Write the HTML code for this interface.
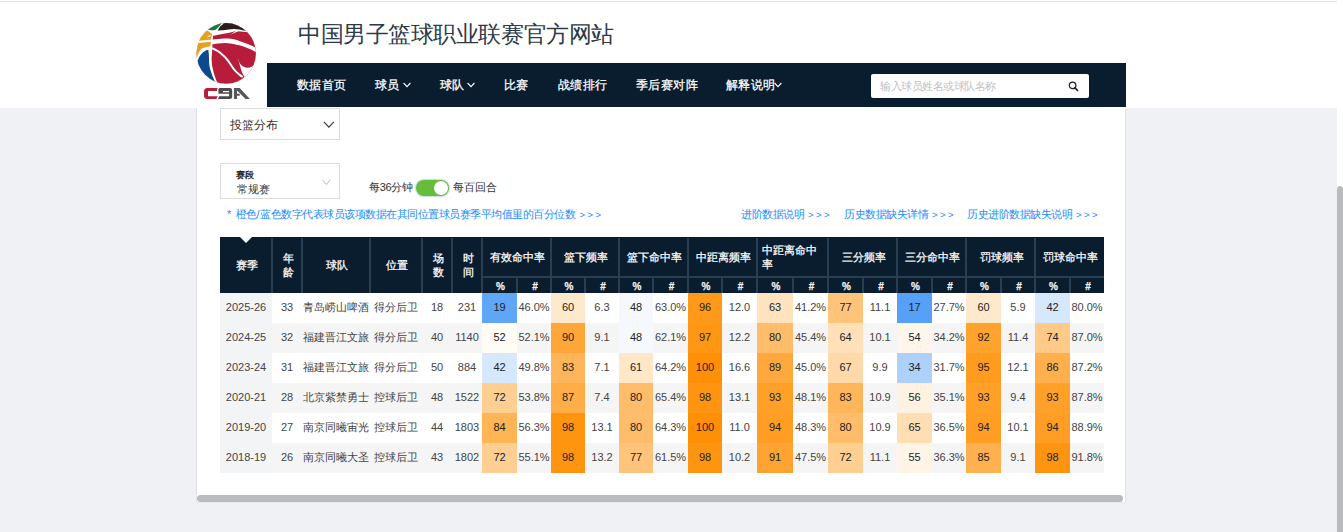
<!DOCTYPE html>
<html lang="zh"><head><meta charset="utf-8"><title>CBA</title>
<style>
*{box-sizing:border-box;margin:0;padding:0}
html,body{width:1343px;height:532px;overflow:hidden}
body{background:#f0f1f5;font-family:"Liberation Sans",sans-serif;color:#333;position:relative}
.abs{position:absolute}
#top{position:absolute;left:0;top:0;width:1343px;height:108px;background:#fff;border-top:1px solid #fff}
#topline{position:absolute;left:0;top:1px;width:1343px;height:1px;background:#e2e5e2}
#title{position:absolute;left:298px;top:20px;font-size:23px;line-height:28px;color:#2b3948;white-space:nowrap;letter-spacing:-0.45px}
#nav{position:absolute;left:267px;top:63px;width:859px;height:44px;background:#091d2e}
.ni{position:absolute;top:0;height:44px;line-height:44px;font-size:12px;color:#fff;-webkit-text-stroke:0.25px #fff;white-space:nowrap;letter-spacing:0.4px}
.chev{display:inline-block;vertical-align:middle;margin-top:-2px}
#search{position:absolute;left:871px;top:74px;width:218px;height:24px;background:#fff;border-radius:2px}
#search span{position:absolute;left:9px;top:0;line-height:24px;font-size:11px;color:#c0c0c0;white-space:nowrap;letter-spacing:-0.5px}
#card{position:absolute;left:196px;top:108px;width:930px;height:395px;background:#fff;border-left:1px solid #dfe1e3;border-right:1px solid #dfe1e3;border-bottom:1px solid #e6e8ea}
.sel{position:absolute;left:220px;width:120px;border:1px solid #dcdcdc;background:#fff}
.note{position:absolute;top:207px;font-size:11px;line-height:14px;color:#1a8cff;white-space:nowrap;letter-spacing:-0.5px}
.note i{font-style:normal;font-size:9.5px;letter-spacing:-0.1px;margin-left:1.5px}
.th{position:absolute;background:#091d2e;color:#fff;font-size:11px;-webkit-text-stroke:0.25px #fff;text-align:center;display:flex;align-items:center;justify-content:center;line-height:14px;padding-left:2px}
.sub{padding-top:3px}
.sep{position:absolute;background:#2a3e52}
.td{position:absolute;height:30px;line-height:28px;text-align:center;font-size:11px;color:#444;white-space:nowrap;overflow:hidden}
.pc{color:#222}
#scroll{position:absolute;left:197px;top:495px;width:926px;height:7px;border-radius:4px;background:#b9bbbd}
</style></head><body>
<div id="top"></div>
<div id="topline"></div>
<svg class="abs" style="left:192px;top:18px" width="70" height="88" viewBox="0 0 70 88">
<defs><clipPath id="ball"><ellipse cx="34.2" cy="35.4" rx="29.7" ry="30.3"/></clipPath></defs>
<g clip-path="url(#ball)">
<rect x="0" y="0" width="70" height="70" fill="#b71c3a"/>
<path fill="#fff" d="M0 0 H70 V15 L53.6 14.1 C50 13.6 47 13.2 43.4 13.3 C41.5 13.5 39.5 14.3 36.1 15 C30 16 25 17 21 17.8 L0 17.8 Z"/>
<path fill="#fff" d="M0 0 H24 L21 17.8 L20.3 30 L19.6 40 C19.7 48 21.2 56 27.6 70 H0 Z"/>
<path fill="#fff" d="M0 23 L21 21.6 C28 21 32 20.5 36.1 20.6 C40 20.8 44 21.8 47.4 22.9 C52 24.3 57 26.5 61.5 28.5 L70 33 V38 C64 34 60 31.5 55.8 30.2 C52 28.8 48 27.3 44.6 26.8 C40 26 36 25 33.3 25.1 C28 25.2 24 25.9 21.5 26.3 L0 26 Z"/>
<path fill="none" stroke="#fff" stroke-width="2" d="M20 30.2 C24 32 27 33.5 29 35.5 C32 38 34 40 35.8 42.4 C37.8 45 39.5 48 41.3 50.5 C43 52.8 45 54.8 47 56.2 C48.5 57.5 49.5 58.3 50.6 59"/>
<path fill="#fff" d="M46 40.6 C46.8 43.5 47.8 46 49.5 47.2 C51 48.4 53 49.6 55.7 49.7 C58.5 49.7 61 48.2 63.3 46.3 L70 46 V70 H53 L52.3 58.7 C51 56.5 49.8 54 49.2 52 C48.5 49.5 47.6 46.5 47 44.3 C46.5 42.8 46.1 41.7 46 40.6 Z"/>
<path fill="#1c7a3f" d="M10 0 H29.8 L29.3 5.7 C27.5 8.2 25.5 10.8 23.1 11.9 C20.5 12.6 17.5 12.2 14 11.6 L10 11.6 Z"/>
<path fill="#2a1d1d" d="M25.9 12.4 C27.2 9.5 28.8 7.5 31.3 6.1 L33 0 H70 V13 L53.3 12.7 C50 12.1 45 11 41.7 11 C38 11.2 35.5 11.6 33.3 11.9 C30 12.2 28 12.4 25.9 12.4 Z"/>
<path fill="#e4a11b" d="M0 12.6 H14.8 C17 13.5 19 15 20 16.3 C19.2 20 18.8 24 18.3 28.5 C14 28.8 11 29.8 8.9 31.1 C6.5 34 5 38 4.6 42.7 L0 42.7 Z"/>
<path fill="#fff" d="M0 23.4 L20 21.5 L19 23.8 L0 25.6 Z"/>
<path fill="#fff" d="M14.5 19.5 L18.8 16.4 L18.2 18.5 Z"/>
<path fill="#0d4a8b" d="M16.3 31.8 C11 33 7.5 37 5.5 43.6 L0 70 H26 C20 58 17.2 50 17.1 44 C17 38 16.8 34 16.3 31.8 Z"/>
<path fill="#fff" d="M38 17 L44.8 12.2 L46 13.6 L41.5 15.3 Z"/>
</g>
<g transform="translate(10,67)">
<path d="M15.6 3 H5.5 Q2 3 2 6.5 V10.6 Q2 14.1 5.5 14.1 H14.4 L15.6 11.2 H6 V6 H14.8 Z" fill="#b81d3a"/>
<path fill-rule="evenodd" fill="#4b4b4d" d="M18 3 H27.8 Q30.2 3 30.2 5.4 V11.7 Q30.2 14.1 27.8 14.1 H16 L17.2 11.3 H27.1 V8.7 H16.4 V4.4 Q16.4 3 18 3 Z M21 5.9 V7.2 H27.1 V5.9 Z"/>
<path d="M31.9 3 H37.7 L47.9 14.1 H43.5 L35.5 6 H35 V14.1 H31.9 Z" fill="#575759"/>
<rect x="34.8" y="8.7" width="2.9" height="2.1" fill="#575759"/>
</g>
</svg>
<div id="title">中国男子篮球职业联赛官方网站</div>
<div id="nav"></div>
<div class="ni" style="left:297px;top:63px">数据首页</div>
<div class="ni" style="left:375px;top:63px">球员<svg class="chev" style="margin-left:3px" width="8" height="6" viewBox="0 0 8 6"><path d="M0.6 1 L4 4.6 L7.4 1" fill="none" stroke="#fff" stroke-width="1.1"/></svg></div>
<div class="ni" style="left:440px;top:63px">球队<svg class="chev" style="margin-left:2px" width="8" height="6" viewBox="0 0 8 6"><path d="M0.6 1 L4 4.6 L7.4 1" fill="none" stroke="#fff" stroke-width="1.1"/></svg></div>
<div class="ni" style="left:504px;top:63px">比赛</div>
<div class="ni" style="left:558px;top:63px">战绩排行</div>
<div class="ni" style="left:636px;top:63px">季后赛对阵</div>
<div class="ni" style="left:726px;top:63px">解释说明<svg class="chev" style="margin-left:-2px" width="8" height="6" viewBox="0 0 8 6"><path d="M0.6 1 L4 4.6 L7.4 1" fill="none" stroke="#fff" stroke-width="1.1"/></svg></div>
<div id="search"><span>输入球员姓名或球队名称</span>
<svg class="abs" style="left:197px;top:7px" width="11" height="11" viewBox="0 0 11 11"><circle cx="4.6" cy="4.4" r="3.3" fill="none" stroke="#222" stroke-width="1.2"/><path d="M7 6.9 L9.6 9.5" stroke="#222" stroke-width="1.7" stroke-linecap="round"/></svg></div>
<div id="card"></div>
<div class="sel" style="top:108px;height:32px"><span class="abs" style="left:9px;top:9px;font-size:12px;line-height:14px;color:#333">投篮分布</span>
<svg class="abs" style="left:102px;top:12px" width="12" height="8" viewBox="0 0 12 8"><path d="M0.9 0.9 L5.9 6.2 L10.9 0.9" fill="none" stroke="#333" stroke-width="1.1"/></svg></div>
<div class="sel" style="top:163px;height:36px"><span class="abs" style="left:15px;top:6px;font-size:9px;line-height:11px;color:#111;-webkit-text-stroke:0.3px #111">赛段</span><span class="abs" style="left:16px;top:19px;font-size:11px;line-height:13px;color:#333">常规赛</span>
<svg class="abs" style="left:101px;top:15px" width="9" height="7" viewBox="0 0 9 7"><path d="M0.5 0.8 L4.4 5.5 L8.3 0.8" fill="none" stroke="#bbb" stroke-width="1"/></svg></div>
<div class="abs" style="left:369px;top:180px;font-size:11px;line-height:15px;color:#333;white-space:nowrap;letter-spacing:-0.3px">每36分钟</div>
<div class="abs" style="left:415px;top:179px;width:35px;height:18px;border-radius:9px;background:#c9def7;box-shadow:0 0 2px #d6e7fb"></div>
<div class="abs" style="left:416px;top:180px;width:33px;height:16px;border-radius:8px;background:#67bd3a"></div>
<div class="abs" style="left:433.5px;top:181px;width:14px;height:14px;border-radius:7px;background:#fff"></div>
<div class="abs" style="left:453px;top:180px;font-size:11px;line-height:15px;color:#333;white-space:nowrap">每百回合</div>
<div class="note" style="left:227px"><b style="font-weight:normal;display:inline-block;width:8.5px;letter-spacing:0">*</b>橙色<b style="font-weight:normal;letter-spacing:0.8px">/</b>蓝色数字代表球员该项数据在其同位置球员赛季平均值里的百分位数 <i>&gt; &gt; &gt;</i></div>
<div class="note" style="left:741px">进阶数据说明 <i>&gt; &gt; &gt;</i></div>
<div class="note" style="left:844px">历史数据缺失详情 <i>&gt; &gt; &gt;</i></div>
<div class="note" style="left:967px">历史进阶数据缺失说明 <i>&gt; &gt; &gt;</i></div>
<div class="abs" style="left:220px;top:237px;width:884px;height:56px;background:#091d2e"></div>
<div class="th" style="left:220px;top:237px;width:52px;height:56px">赛季</div>
<div class="th" style="left:272px;top:237px;width:30px;height:56px">年<br>龄</div>
<div class="th" style="left:302px;top:237px;width:68px;height:56px">球队</div>
<div class="th" style="left:370px;top:237px;width:52px;height:56px">位置</div>
<div class="th" style="left:422px;top:237px;width:30px;height:56px">场<br>数</div>
<div class="th" style="left:452px;top:237px;width:30px;height:56px">时<br>间</div>
<div class="th" style="left:482px;top:237px;width:69px;height:40px">有效命中率</div>
<div class="th sub" style="left:482px;top:277px;width:35px;height:16px;font-size:10px;font-weight:bold;color:#e6e6e6">%</div>
<div class="th sub" style="left:517px;top:277px;width:34px;height:16px;font-size:10px;font-weight:bold;color:#e6e6e6">#</div>
<div class="th" style="left:551px;top:237px;width:68px;height:40px">篮下频率</div>
<div class="th sub" style="left:551px;top:277px;width:34px;height:16px;font-size:10px;font-weight:bold;color:#e6e6e6">%</div>
<div class="th sub" style="left:585px;top:277px;width:34px;height:16px;font-size:10px;font-weight:bold;color:#e6e6e6">#</div>
<div class="th" style="left:619px;top:237px;width:69px;height:40px">篮下命中率</div>
<div class="th sub" style="left:619px;top:277px;width:34px;height:16px;font-size:10px;font-weight:bold;color:#e6e6e6">%</div>
<div class="th sub" style="left:653px;top:277px;width:35px;height:16px;font-size:10px;font-weight:bold;color:#e6e6e6">#</div>
<div class="th" style="left:688px;top:237px;width:69px;height:40px">中距离频率</div>
<div class="th sub" style="left:688px;top:277px;width:34px;height:16px;font-size:10px;font-weight:bold;color:#e6e6e6">%</div>
<div class="th sub" style="left:722px;top:277px;width:35px;height:16px;font-size:10px;font-weight:bold;color:#e6e6e6">#</div>
<div class="th" style="left:757px;top:237px;width:71px;height:40px;justify-content:flex-start;padding-left:5px;text-align:left">中距离命中<br>率</div>
<div class="th sub" style="left:757px;top:277px;width:36px;height:16px;font-size:10px;font-weight:bold;color:#e6e6e6">%</div>
<div class="th sub" style="left:793px;top:277px;width:35px;height:16px;font-size:10px;font-weight:bold;color:#e6e6e6">#</div>
<div class="th" style="left:828px;top:237px;width:69px;height:40px">三分频率</div>
<div class="th sub" style="left:828px;top:277px;width:35px;height:16px;font-size:10px;font-weight:bold;color:#e6e6e6">%</div>
<div class="th sub" style="left:863px;top:277px;width:34px;height:16px;font-size:10px;font-weight:bold;color:#e6e6e6">#</div>
<div class="th" style="left:897px;top:237px;width:69px;height:40px">三分命中率</div>
<div class="th sub" style="left:897px;top:277px;width:35px;height:16px;font-size:10px;font-weight:bold;color:#e6e6e6">%</div>
<div class="th sub" style="left:932px;top:277px;width:34px;height:16px;font-size:10px;font-weight:bold;color:#e6e6e6">#</div>
<div class="th" style="left:966px;top:237px;width:69px;height:40px">罚球频率</div>
<div class="th sub" style="left:966px;top:277px;width:35px;height:16px;font-size:10px;font-weight:bold;color:#e6e6e6">%</div>
<div class="th sub" style="left:1001px;top:277px;width:34px;height:16px;font-size:10px;font-weight:bold;color:#e6e6e6">#</div>
<div class="th" style="left:1035px;top:237px;width:69px;height:40px">罚球命中率</div>
<div class="th sub" style="left:1035px;top:277px;width:35px;height:16px;font-size:10px;font-weight:bold;color:#e6e6e6">%</div>
<div class="th sub" style="left:1070px;top:277px;width:34px;height:16px;font-size:10px;font-weight:bold;color:#e6e6e6">#</div>
<div class="sep" style="left:271px;top:238px;width:2px;height:55px"></div>
<div class="sep" style="left:301px;top:238px;width:2px;height:55px"></div>
<div class="sep" style="left:369px;top:238px;width:2px;height:55px"></div>
<div class="sep" style="left:421px;top:238px;width:2px;height:55px"></div>
<div class="sep" style="left:451px;top:238px;width:2px;height:55px"></div>
<div class="sep" style="left:481px;top:238px;width:2px;height:55px"></div>
<div class="sep" style="left:516px;top:277px;width:2px;height:16px"></div>
<div class="sep" style="left:550px;top:238px;width:2px;height:55px"></div>
<div class="sep" style="left:584px;top:277px;width:2px;height:16px"></div>
<div class="sep" style="left:618px;top:238px;width:2px;height:55px"></div>
<div class="sep" style="left:652px;top:277px;width:2px;height:16px"></div>
<div class="sep" style="left:687px;top:238px;width:2px;height:55px"></div>
<div class="sep" style="left:721px;top:277px;width:2px;height:16px"></div>
<div class="sep" style="left:756px;top:238px;width:2px;height:55px"></div>
<div class="sep" style="left:792px;top:277px;width:2px;height:16px"></div>
<div class="sep" style="left:827px;top:238px;width:2px;height:55px"></div>
<div class="sep" style="left:862px;top:277px;width:2px;height:16px"></div>
<div class="sep" style="left:896px;top:238px;width:2px;height:55px"></div>
<div class="sep" style="left:931px;top:277px;width:2px;height:16px"></div>
<div class="sep" style="left:965px;top:238px;width:2px;height:55px"></div>
<div class="sep" style="left:1000px;top:277px;width:2px;height:16px"></div>
<div class="sep" style="left:1034px;top:238px;width:2px;height:55px"></div>
<div class="sep" style="left:1069px;top:277px;width:2px;height:16px"></div>
<div class="sep" style="left:482px;top:276px;width:622px;height:2px"></div>
<div class="abs" style="left:240px;top:237px;width:0;height:0;border-left:6px solid transparent;border-right:6px solid transparent;border-top:6px solid #fff"></div>
<div class="abs" style="left:220px;top:293px;width:884px;height:30px;background:#fff"></div>
<div class="abs" style="left:220px;top:293px;width:52px;height:30px;background:#f3f4f6"></div>
<div class="td" style="left:220px;top:293px;width:52px">2025-26</div>
<div class="td" style="left:272px;top:293px;width:30px">33</div>
<div class="td" style="left:302px;top:293px;width:68px">青岛崂山啤酒</div>
<div class="td" style="left:370px;top:293px;width:52px">得分后卫</div>
<div class="td" style="left:422px;top:293px;width:30px">18</div>
<div class="td" style="left:452px;top:293px;width:30px">231</div>
<div class="td pc" style="left:482px;top:293px;width:35px;background:#60a6f7">19</div>
<div class="td" style="left:517px;top:293px;width:34px">46.0%</div>
<div class="td pc" style="left:551px;top:293px;width:34px;background:#ffe9cd">60</div>
<div class="td" style="left:585px;top:293px;width:34px">6.3</div>
<div class="td pc" style="left:619px;top:293px;width:34px;background:#f5f9fe">48</div>
<div class="td" style="left:653px;top:293px;width:35px">63.0%</div>
<div class="td pc" style="left:688px;top:293px;width:34px;background:#ff991a">96</div>
<div class="td" style="left:722px;top:293px;width:35px">12.0</div>
<div class="td pc" style="left:757px;top:293px;width:36px;background:#ffe2be">63</div>
<div class="td" style="left:793px;top:293px;width:35px">41.2%</div>
<div class="td pc" style="left:828px;top:293px;width:35px;background:#ffc379">77</div>
<div class="td" style="left:863px;top:293px;width:34px">11.1</div>
<div class="td pc" style="left:897px;top:293px;width:35px;background:#56a0f7">17</div>
<div class="td" style="left:932px;top:293px;width:34px">27.7%</div>
<div class="td pc" style="left:966px;top:293px;width:35px;background:#ffe9cd">60</div>
<div class="td" style="left:1001px;top:293px;width:34px">5.9</div>
<div class="td pc" style="left:1035px;top:293px;width:35px;background:#d6e8fd">42</div>
<div class="td" style="left:1070px;top:293px;width:34px">80.0%</div>
<div class="abs" style="left:220px;top:323px;width:884px;height:30px;background:#f5f5f5"></div>
<div class="abs" style="left:220px;top:323px;width:52px;height:30px;background:#f3f4f6"></div>
<div class="td" style="left:220px;top:323px;width:52px">2024-25</div>
<div class="td" style="left:272px;top:323px;width:30px">32</div>
<div class="td" style="left:302px;top:323px;width:68px">福建晋江文旅</div>
<div class="td" style="left:370px;top:323px;width:52px">得分后卫</div>
<div class="td" style="left:422px;top:323px;width:30px">40</div>
<div class="td" style="left:452px;top:323px;width:30px">1140</div>
<div class="td pc" style="left:482px;top:323px;width:35px;background:#fffbf5">52</div>
<div class="td" style="left:517px;top:323px;width:34px">52.1%</div>
<div class="td pc" style="left:551px;top:323px;width:34px;background:#ffa638">90</div>
<div class="td" style="left:585px;top:323px;width:34px">9.1</div>
<div class="td pc" style="left:619px;top:323px;width:34px;background:#f5f9fe">48</div>
<div class="td" style="left:653px;top:323px;width:35px">62.1%</div>
<div class="td pc" style="left:688px;top:323px;width:34px;background:#ff9715">97</div>
<div class="td" style="left:722px;top:323px;width:35px">12.2</div>
<div class="td pc" style="left:757px;top:323px;width:36px;background:#ffbc6a">80</div>
<div class="td" style="left:793px;top:323px;width:35px">45.4%</div>
<div class="td pc" style="left:828px;top:323px;width:35px;background:#ffe0b9">64</div>
<div class="td" style="left:863px;top:323px;width:34px">10.1</div>
<div class="td pc" style="left:897px;top:323px;width:35px;background:#fff6eb">54</div>
<div class="td" style="left:932px;top:323px;width:34px">34.2%</div>
<div class="td pc" style="left:966px;top:323px;width:35px;background:#ffa22e">92</div>
<div class="td" style="left:1001px;top:323px;width:34px">11.4</div>
<div class="td pc" style="left:1035px;top:323px;width:35px;background:#ffca87">74</div>
<div class="td" style="left:1070px;top:323px;width:34px">87.0%</div>
<div class="abs" style="left:220px;top:353px;width:884px;height:30px;background:#fff"></div>
<div class="abs" style="left:220px;top:353px;width:52px;height:30px;background:#f3f4f6"></div>
<div class="td" style="left:220px;top:353px;width:52px">2023-24</div>
<div class="td" style="left:272px;top:353px;width:30px">31</div>
<div class="td" style="left:302px;top:353px;width:68px">福建晋江文旅</div>
<div class="td" style="left:370px;top:353px;width:52px">得分后卫</div>
<div class="td" style="left:422px;top:353px;width:30px">50</div>
<div class="td" style="left:452px;top:353px;width:30px">884</div>
<div class="td pc" style="left:482px;top:353px;width:35px;background:#d6e8fd">42</div>
<div class="td" style="left:517px;top:353px;width:34px">49.8%</div>
<div class="td pc" style="left:551px;top:353px;width:34px;background:#ffb65b">83</div>
<div class="td" style="left:585px;top:353px;width:34px">7.1</div>
<div class="td pc" style="left:619px;top:353px;width:34px;background:#ffe7c8">61</div>
<div class="td" style="left:653px;top:353px;width:35px">64.2%</div>
<div class="td pc" style="left:688px;top:353px;width:34px;background:#ff9006">100</div>
<div class="td" style="left:722px;top:353px;width:35px">16.6</div>
<div class="td pc" style="left:757px;top:353px;width:36px;background:#ffa83d">89</div>
<div class="td" style="left:793px;top:353px;width:35px">45.0%</div>
<div class="td pc" style="left:828px;top:353px;width:35px;background:#ffd9aa">67</div>
<div class="td" style="left:863px;top:353px;width:34px">9.9</div>
<div class="td pc" style="left:897px;top:353px;width:35px;background:#add1fb">34</div>
<div class="td" style="left:932px;top:353px;width:34px">31.7%</div>
<div class="td pc" style="left:966px;top:353px;width:35px;background:#ff9b1f">95</div>
<div class="td" style="left:1001px;top:353px;width:34px">12.1</div>
<div class="td pc" style="left:1035px;top:353px;width:35px;background:#ffaf4c">86</div>
<div class="td" style="left:1070px;top:353px;width:34px">87.2%</div>
<div class="abs" style="left:220px;top:383px;width:884px;height:30px;background:#f5f5f5"></div>
<div class="abs" style="left:220px;top:383px;width:52px;height:30px;background:#f3f4f6"></div>
<div class="td" style="left:220px;top:383px;width:52px">2020-21</div>
<div class="td" style="left:272px;top:383px;width:30px">28</div>
<div class="td" style="left:302px;top:383px;width:68px">北京紫禁勇士</div>
<div class="td" style="left:370px;top:383px;width:52px">控球后卫</div>
<div class="td" style="left:422px;top:383px;width:30px">48</div>
<div class="td" style="left:452px;top:383px;width:30px">1522</div>
<div class="td pc" style="left:482px;top:383px;width:35px;background:#ffce91">72</div>
<div class="td" style="left:517px;top:383px;width:34px">53.8%</div>
<div class="td pc" style="left:551px;top:383px;width:34px;background:#ffad47">87</div>
<div class="td" style="left:585px;top:383px;width:34px">7.4</div>
<div class="td pc" style="left:619px;top:383px;width:34px;background:#ffbc6a">80</div>
<div class="td" style="left:653px;top:383px;width:35px">65.4%</div>
<div class="td pc" style="left:688px;top:383px;width:34px;background:#ff9410">98</div>
<div class="td" style="left:722px;top:383px;width:35px">13.1</div>
<div class="td pc" style="left:757px;top:383px;width:36px;background:#ffa029">93</div>
<div class="td" style="left:793px;top:383px;width:35px">48.1%</div>
<div class="td pc" style="left:828px;top:383px;width:35px;background:#ffb65b">83</div>
<div class="td" style="left:863px;top:383px;width:34px">10.9</div>
<div class="td pc" style="left:897px;top:383px;width:35px;background:#fff2e1">56</div>
<div class="td" style="left:932px;top:383px;width:34px">35.1%</div>
<div class="td pc" style="left:966px;top:383px;width:35px;background:#ffa029">93</div>
<div class="td" style="left:1001px;top:383px;width:34px">9.4</div>
<div class="td pc" style="left:1035px;top:383px;width:35px;background:#ffa029">93</div>
<div class="td" style="left:1070px;top:383px;width:34px">87.8%</div>
<div class="abs" style="left:220px;top:413px;width:884px;height:30px;background:#fff"></div>
<div class="abs" style="left:220px;top:413px;width:52px;height:30px;background:#f3f4f6"></div>
<div class="td" style="left:220px;top:413px;width:52px">2019-20</div>
<div class="td" style="left:272px;top:413px;width:30px">27</div>
<div class="td" style="left:302px;top:413px;width:68px">南京同曦宙光</div>
<div class="td" style="left:370px;top:413px;width:52px">控球后卫</div>
<div class="td" style="left:422px;top:413px;width:30px">44</div>
<div class="td" style="left:452px;top:413px;width:30px">1803</div>
<div class="td pc" style="left:482px;top:413px;width:35px;background:#ffb456">84</div>
<div class="td" style="left:517px;top:413px;width:34px">56.3%</div>
<div class="td pc" style="left:551px;top:413px;width:34px;background:#ff9410">98</div>
<div class="td" style="left:585px;top:413px;width:34px">13.1</div>
<div class="td pc" style="left:619px;top:413px;width:34px;background:#ffbc6a">80</div>
<div class="td" style="left:653px;top:413px;width:35px">64.3%</div>
<div class="td pc" style="left:688px;top:413px;width:34px;background:#ff9006">100</div>
<div class="td" style="left:722px;top:413px;width:35px">11.0</div>
<div class="td pc" style="left:757px;top:413px;width:36px;background:#ff9d24">94</div>
<div class="td" style="left:793px;top:413px;width:35px">48.3%</div>
<div class="td pc" style="left:828px;top:413px;width:35px;background:#ffbc6a">80</div>
<div class="td" style="left:863px;top:413px;width:34px">10.9</div>
<div class="td pc" style="left:897px;top:413px;width:35px;background:#ffdeb4">65</div>
<div class="td" style="left:932px;top:413px;width:34px">36.5%</div>
<div class="td pc" style="left:966px;top:413px;width:35px;background:#ff9d24">94</div>
<div class="td" style="left:1001px;top:413px;width:34px">10.1</div>
<div class="td pc" style="left:1035px;top:413px;width:35px;background:#ff9d24">94</div>
<div class="td" style="left:1070px;top:413px;width:34px">88.9%</div>
<div class="abs" style="left:220px;top:443px;width:884px;height:30px;background:#f5f5f5"></div>
<div class="abs" style="left:220px;top:443px;width:52px;height:30px;background:#f3f4f6"></div>
<div class="td" style="left:220px;top:443px;width:52px">2018-19</div>
<div class="td" style="left:272px;top:443px;width:30px">26</div>
<div class="td" style="left:302px;top:443px;width:68px">南京同曦大圣</div>
<div class="td" style="left:370px;top:443px;width:52px">控球后卫</div>
<div class="td" style="left:422px;top:443px;width:30px">43</div>
<div class="td" style="left:452px;top:443px;width:30px">1802</div>
<div class="td pc" style="left:482px;top:443px;width:35px;background:#ffce91">72</div>
<div class="td" style="left:517px;top:443px;width:34px">55.1%</div>
<div class="td pc" style="left:551px;top:443px;width:34px;background:#ff9410">98</div>
<div class="td" style="left:585px;top:443px;width:34px">13.2</div>
<div class="td pc" style="left:619px;top:443px;width:34px;background:#ffc379">77</div>
<div class="td" style="left:653px;top:443px;width:35px">61.5%</div>
<div class="td pc" style="left:688px;top:443px;width:34px;background:#ff9410">98</div>
<div class="td" style="left:722px;top:443px;width:35px">10.2</div>
<div class="td pc" style="left:757px;top:443px;width:36px;background:#ffa433">91</div>
<div class="td" style="left:793px;top:443px;width:35px">47.5%</div>
<div class="td pc" style="left:828px;top:443px;width:35px;background:#ffce91">72</div>
<div class="td" style="left:863px;top:443px;width:34px">11.1</div>
<div class="td pc" style="left:897px;top:443px;width:35px;background:#fff4e6">55</div>
<div class="td" style="left:932px;top:443px;width:34px">36.3%</div>
<div class="td pc" style="left:966px;top:443px;width:35px;background:#ffb151">85</div>
<div class="td" style="left:1001px;top:443px;width:34px">9.1</div>
<div class="td pc" style="left:1035px;top:443px;width:35px;background:#ff9410">98</div>
<div class="td" style="left:1070px;top:443px;width:34px">91.8%</div>
<div id="scroll"></div>
<div class="abs" style="left:1337px;top:0;width:6px;height:532px;background:#fff"></div>
<div class="abs" style="left:1337px;top:186px;width:6px;height:350px;border-radius:3px;background:#b9babc"></div>
</body></html>
